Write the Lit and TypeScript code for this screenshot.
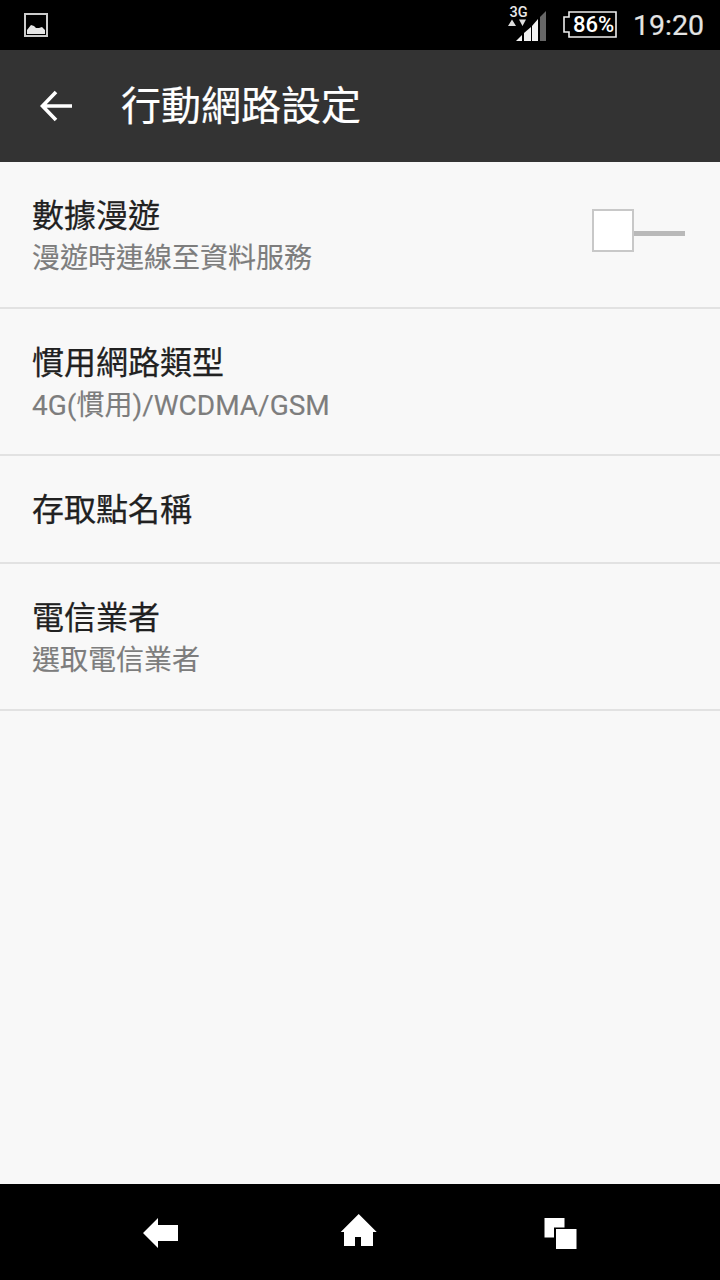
import { LitElement, html, css } from "lit";
import { customElement } from "lit/decorators.js";

@customElement("app-root")
export class AppRoot extends LitElement {
  static styles = css`
    :host {
      display: block;
      width: 720px;
      height: 1280px;
      background: #f8f8f8;
      font-family: "Roboto", "Noto Sans CJK TC", sans-serif;
      overflow: hidden;
    }
    .page { display: flex; flex-direction: column; height: 1280px; }
    .status {
      height: 50px;
      background: #000;
      display: flex;
      align-items: center;
      padding: 0 16px 0 24px;
      box-sizing: border-box;
      color: #e4e4e4;
      flex: none;
    }
    .status svg { display: block; flex: none; }
    .spacer { flex: 1; }
    .battery { margin-left: 17px; position: relative; width: 54px; height: 27px; margin-top: -1px; }
    .battery-text {
      position: absolute;
      left: 7px;
      right: 0;
      top: 0;
      line-height: 27px;
      text-align: center;
      font-size: 22px;
      font-weight: 500;
      color: #fff;
    }
    .time {
      margin-left: 16px;
      padding-top: 2px;
      font-size: 28.5px;
      line-height: 50px;
      width: 71px;
      -webkit-text-stroke: 0.2px #e4e4e4;
    }
    .bar {
      height: 112px;
      background: #333;
      display: flex;
      align-items: center;
      flex: none;
      padding-left: 40px;
      box-sizing: border-box;
    }
    .bar-title {
      margin-left: 49px;
      margin-top: 2px;
      font-size: 40px;
      line-height: 112px;
      color: #fff;
      font-weight: 400;
      -webkit-text-stroke: 0.2px #fff;
    }
    .list { flex: 1; }
    .row {
      display: flex;
      align-items: center;
      padding: 0 35px 0 32px;
      border-bottom: 2px solid #e2e2e2;
      box-sizing: border-box;
      height: 147px;
    }
    .row.short { height: 108px; }
    .text { flex: 1; display: flex; flex-direction: column; padding-top: 1px; }
    .t { font-size: 32px; line-height: 46px; color: #212121; -webkit-text-stroke: 0.25px #212121; }
    .s { font-size: 28px; line-height: 38px; margin-top: 1px; color: #7d7d7d; -webkit-text-stroke: 0.15px #7d7d7d; }
    .toggle { display: flex; align-items: flex-start; margin-bottom: 8px; }
    .knob { width: 42px; height: 43px; box-sizing: border-box; background: #fff; border: 2px solid #c8c8c8; }
    .track { width: 51px; height: 5px; margin-top: 22px; background: #b9b9b9; }
    .nav {
      height: 96px;
      background: #000;
      flex: none;
    }
    .nav svg { display: block; }
  `;

  private row(title: string, sub?: string, toggle = false) {
    return html`<div class="row ${sub ? "" : "short"}">
      <div class="text">
        <div class="t">${title}</div>
        ${sub ? html`<div class="s">${sub}</div>` : ""}
      </div>
      ${toggle ? html`<div class="toggle"><div class="knob"></div><div class="track"></div></div>` : ""}
    </div>`;
  }

  render() {
    return html`<div class="page">
      <div class="status">
        <svg width="24" height="24" viewBox="0 0 24 24">
          <rect x="1" y="1" width="22" height="22" fill="none" stroke="#ccc" stroke-width="2"/>
          <path d="M3 21 V17 L7 12 L10 13 L12 15 L15 15 L18 14 L21 17 V21 Z" fill="#e6e6e6"/>
        </svg>
        <div class="spacer"></div>
        <svg width="42" height="40" viewBox="504 5 42 40">
          <text x="509.5" y="17" font-family="Roboto" font-size="14.5" font-weight="500" fill="#e8e8e8">3G</text>
          <path d="M508 26 L512 19.5 L516 26 Z M519 19.5 L526 19.5 L522.5 26 Z" fill="#ddd"/>
          <path d="M516 41 L522 35 V41 Z" fill="#f2f2f2"/>
          <path d="M524 41 V33 L531 27 V41 Z" fill="#f2f2f2"/>
          <path d="M532 41 V26 L538 19 V41 Z" fill="#f2f2f2"/>
          <path d="M540 41 V17 L546 11 V41 Z" fill="#666"/>
        </svg>
        <div class="battery">
          <svg width="54" height="27" viewBox="0 0 54 27">
            <path d="M53 1 H6 V6 H1 V21 H6 V26 H53 Z" fill="none" stroke="#eee" stroke-width="1.6"/>
          </svg>
          <div class="battery-text">86%</div>
        </div>
        <div class="time">19:20</div>
      </div>
      <div class="bar">
        <svg width="32" height="32" viewBox="0 0 32 32">
          <path d="M32 16 H3 M16 2 L2.5 16 L16 30" fill="none" stroke="#fff" stroke-width="3.6"/>
        </svg>
        <div class="bar-title">行動網路設定</div>
      </div>
      <div class="list">
        ${this.row("數據漫遊", "漫遊時連線至資料服務", true)}
        ${this.row("慣用網路類型", "4G(慣用)/WCDMA/GSM")}
        ${this.row("存取點名稱")}
        ${this.row("電信業者", "選取電信業者")}
      </div>
      <div class="nav">
        <svg width="720" height="96" viewBox="0 1184 720 96">
          <path d="M143 1233 L158 1218 V1225 H178 V1241 H158 V1248 Z" fill="#fff"/>
          <path fill-rule="evenodd" d="M358.7 1214 L376.7 1232 H373 V1246 H344 V1232 H340.7 Z M355 1246 H361 V1237 H355 Z" fill="#fff"/>
          <path d="M544.5 1218 H564.5 V1227.5 H554 V1237.5 H544.5 Z" fill="#fff"/>
          <rect x="556" y="1229" width="20.5" height="20" fill="#fff"/>
        </svg>
      </div>
    </div>`;
  }
}
